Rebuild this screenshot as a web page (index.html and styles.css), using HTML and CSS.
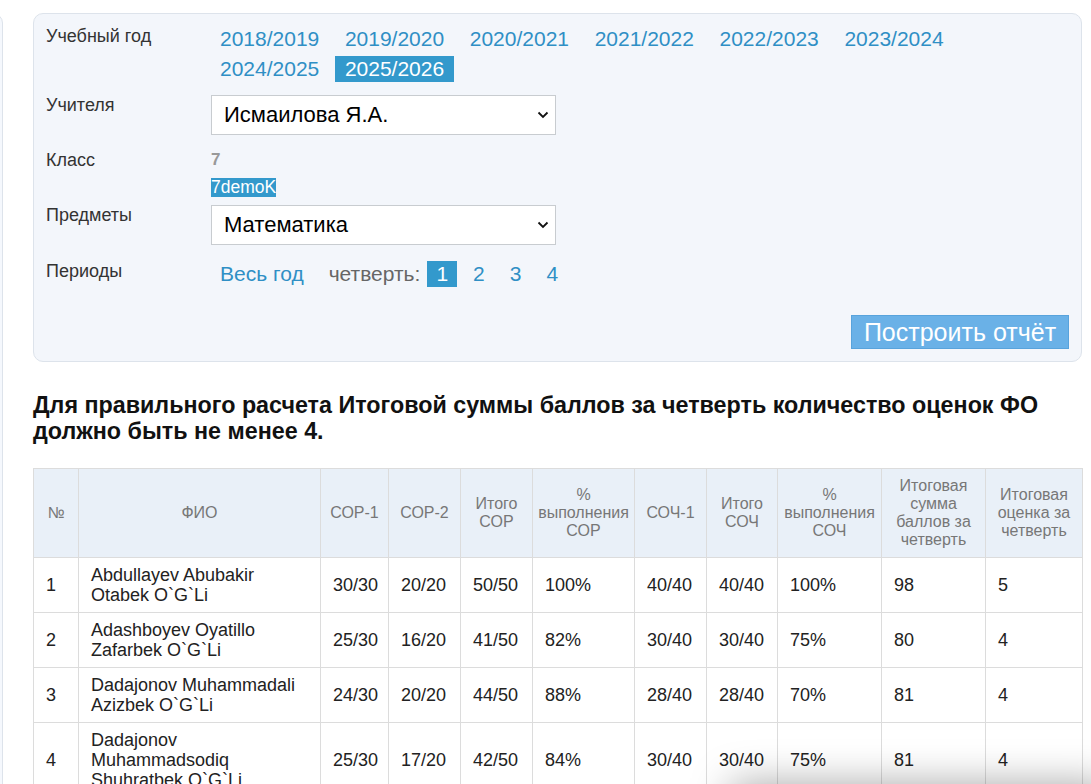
FILE: index.html
```html
<!DOCTYPE html>
<html lang="ru">
<head>
    <meta charset="UTF-8" />
    <meta name="viewport" content="width=device-width, initial-scale=1.0" />
    <title>Отчёт по четверти</title>
    <link rel="stylesheet" href="styles.css">
</head>
<body>
    <div class="page">
        <aside class="sidebar"></aside>

        <main class="content">
            <section class="filters">
                <div class="filter-row row-years">
                    <div class="filter-label">Учебный год</div>
                    <div class="years">
                        <a class="year">2018/2019</a>
                        <a class="year">2019/2020</a>
                        <a class="year">2020/2021</a>
                        <a class="year">2021/2022</a>
                        <a class="year">2022/2023</a>
                        <a class="year">2023/2024</a>
                        <a class="year">2024/2025</a>
                        <a class="year active">2025/2026</a>
                    </div>
                </div>

                <div class="filter-row row-teacher">
                    <div class="filter-label">Учителя</div>
                    <div class="select-box">
                        <span>Исмаилова Я.А.</span>
                        <svg class="chevron" width="12" height="8" viewBox="0 0 12 8"><path d="M1.5 1.5 L6 6 L10.5 1.5" fill="none" stroke="#111" stroke-width="1.8"/></svg>
                    </div>
                </div>

                <div class="filter-row row-class">
                    <div class="filter-label">Класс</div>
                    <div class="class-list">
                        <div class="class-grade">7</div>
                        <div class="class-item"><span class="class-chip">7demoK</span></div>
                    </div>
                </div>

                <div class="filter-row row-subject">
                    <div class="filter-label">Предметы</div>
                    <div class="select-box">
                        <span>Математика</span>
                        <svg class="chevron" width="12" height="8" viewBox="0 0 12 8"><path d="M1.5 1.5 L6 6 L10.5 1.5" fill="none" stroke="#111" stroke-width="1.8"/></svg>
                    </div>
                </div>

                <div class="filter-row row-periods">
                    <div class="filter-label">Периоды</div>
                    <div class="periods">
                        <a class="period-all">Весь год</a>
                        <span class="quarter-label">четверть:</span>
                        <a class="quarter active">1</a>
                        <a class="quarter">2</a>
                        <a class="quarter">3</a>
                        <a class="quarter">4</a>
                    </div>
                </div>

                <div class="filter-actions">
                    <button type="button" class="build-btn">Построить отчёт</button>
                </div>
            </section>

            <h3 class="notice">Для правильного расчета Итоговой суммы баллов за четверть количество оценок ФО должно быть не менее 4.</h3>

            <table class="report">
                <colgroup>
                    <col style="width:45px">
                    <col style="width:242px">
                    <col style="width:68px">
                    <col style="width:72px">
                    <col style="width:72px">
                    <col style="width:102px">
                    <col style="width:72px">
                    <col style="width:71px">
                    <col style="width:104px">
                    <col style="width:104px">
                    <col style="width:97px">
                </colgroup>
                <thead>
                    <tr>
                        <th>№</th>
                        <th>ФИО</th>
                        <th>СОР-1</th>
                        <th>СОР-2</th>
                        <th>Итого СОР</th>
                        <th>% выполнения СОР</th>
                        <th>СОЧ-1</th>
                        <th>Итого СОЧ</th>
                        <th>% выполнения СОЧ</th>
                        <th>Итоговая сумма баллов за четверть</th>
                        <th>Итоговая оценка за четверть</th>
                    </tr>
                </thead>
                <tbody>
                    <tr>
                        <td>1</td>
                        <td>Abdullayev Abubakir Otabek O`G`Li</td>
                        <td>30/30</td>
                        <td>20/20</td>
                        <td>50/50</td>
                        <td>100%</td>
                        <td>40/40</td>
                        <td>40/40</td>
                        <td>100%</td>
                        <td>98</td>
                        <td>5</td>
                    </tr>
                    <tr>
                        <td>2</td>
                        <td>Adashboyev Oyatillo Zafarbek O`G`Li</td>
                        <td>25/30</td>
                        <td>16/20</td>
                        <td>41/50</td>
                        <td>82%</td>
                        <td>30/40</td>
                        <td>30/40</td>
                        <td>75%</td>
                        <td>80</td>
                        <td>4</td>
                    </tr>
                    <tr>
                        <td>3</td>
                        <td>Dadajonov Muhammadali Azizbek O`G`Li</td>
                        <td>24/30</td>
                        <td>20/20</td>
                        <td>44/50</td>
                        <td>88%</td>
                        <td>28/40</td>
                        <td>28/40</td>
                        <td>70%</td>
                        <td>81</td>
                        <td>4</td>
                    </tr>
                    <tr>
                        <td>4</td>
                        <td>Dadajonov Muhammadsodiq Shuhratbek O`G`Li</td>
                        <td>25/30</td>
                        <td>17/20</td>
                        <td>42/50</td>
                        <td>84%</td>
                        <td>30/40</td>
                        <td>30/40</td>
                        <td>75%</td>
                        <td>81</td>
                        <td>4</td>
                    </tr>
                </tbody>
            </table>
        </main>
    </div>

    <div class="bottom-shadow"></div>
</body>
</html>
```

FILE: styles.css
```css
body {
    font-family: 'Liberation Sans', Arial, sans-serif;
    background-color: #fff;
    color: #222;
    margin: 0;
    padding: 0;
    overflow: hidden;
}
.page {
    display: flex;
    align-items: flex-start;
}
.sidebar {
    margin-left: -100px;
    margin-top: 13px;
    width: 101px;
    height: 900px;
    background: #f5f8fd;
    border: 1px solid #dde3eb;
    border-radius: 10px;
}
.content {
    margin-left: 30px;
    margin-top: 13px;
    width: 1049px;
}
/* Filter panel */
.filters {
    background: #f3f6fb;
    border: 1px solid #dde3eb;
    border-radius: 10px;
    padding: 12px 12px 12px 12px;
}
.filter-row {
    display: grid;
    grid-template-columns: 164px 1fr;
    align-items: start;
}
.filter-label {
    font-size: 18px;
    line-height: 20px;
    color: #333;
}
.row-teacher {
    margin-top: 13px;
}
.row-class {
    margin-top: 15px;
}
.row-subject {
    margin-top: 8px;
}
.row-periods {
    margin-top: 16px;
}
.years {
    display: flex;
    flex-wrap: wrap;
    column-gap: 5.6px;
    row-gap: 4px;
    max-width: 760px;
}
.year,
.period-all,
.quarter {
    display: inline-block;
    font-size: 21px;
    line-height: 26px;
    color: #2f8fc5;
    padding: 0 10px;
    cursor: pointer;
}
.year.active,
.quarter.active {
    background: #3399cc;
    color: #fff;
}
.select-box {
    box-sizing: border-box;
    width: 345px;
    height: 40px;
    margin-left: 1px;
    background: #fff;
    border: 1px solid #c8ccd0;
    display: flex;
    align-items: center;
    justify-content: space-between;
    padding: 0 6px 0 12px;
    font-size: 22px;
    color: #000;
}
.class-list {
    margin-left: 1px;
}
.class-grade {
    font-size: 17px;
    line-height: 20px;
    font-weight: bold;
    color: #999;
}
.class-item {
    margin-top: 8px;
}
.class-chip {
    display: inline-block;
    font-size: 17.5px;
    line-height: 19px;
    background: #3399cc;
    color: #fff;
}
.periods {
    display: flex;
    align-items: center;
    gap: 7px;
}
.period-all {
    margin-right: 8px;
}
.quarter {
    padding: 0 9px;
}
.quarter-label {
    font-size: 21px;
    line-height: 26px;
    color: #666;
}
.filter-actions {
    display: flex;
    justify-content: flex-end;
    margin-top: 28px;
}
.build-btn {
    font-family: inherit;
    background: #6ab1e7;
    color: #fff;
    border: 1px solid #58a3dc;
    font-size: 25px;
    height: 34px;
    width: 218px;
    padding: 0;
    cursor: pointer;
}
/* Notice */
.notice {
    font-size: 23.3px;
    line-height: 26px;
    font-weight: bold;
    color: #111;
    margin: 30px 0 24px 0;
}
/* Report table */
.report {
    width: 1049px;
    table-layout: fixed;
    border-collapse: collapse;
}
.report th,
.report td {
    border: 1px solid #dcdcdc;
}
.report th {
    background: #e9f0f8;
    color: #777;
    font-weight: normal;
    font-size: 16px;
    line-height: 18px;
    padding: 8px 4px;
    text-align: center;
    vertical-align: middle;
}
.report td {
    font-size: 18px;
    line-height: 20px;
    padding: 7px 12px;
    vertical-align: middle;
    color: #222;
}
.bottom-shadow {
    position: fixed;
    right: -20px;
    bottom: -50px;
    width: 380px;
    height: 50px;
    background: #fff;
    box-shadow: 0 0 40px rgba(0,0,0,0.35);
}
```
